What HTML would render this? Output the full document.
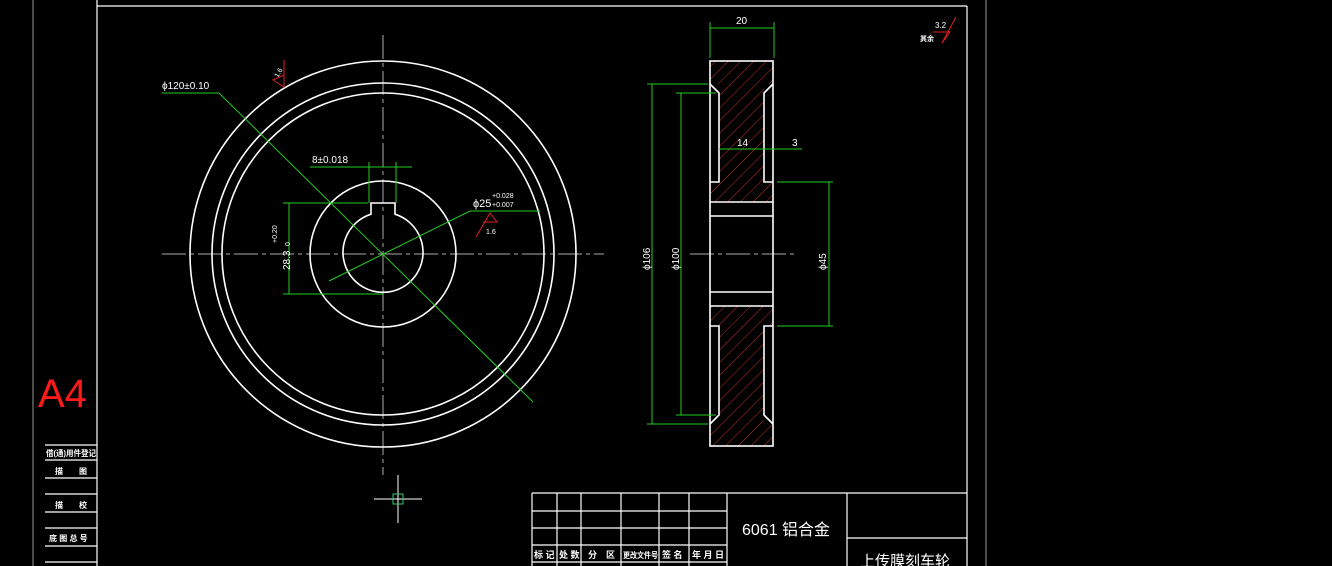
<!DOCTYPE html>
<html><head><meta charset="utf-8"><style>
html,body{margin:0;padding:0;background:#000;width:1332px;height:566px;overflow:hidden}
svg{display:block}
text{font-family:"Liberation Sans","Noto Sans CJK SC",sans-serif}
</style></head><body>
<svg width="1332" height="566" viewBox="0 0 1332 566" xmlns="http://www.w3.org/2000/svg">
<defs>
<pattern id="h" width="9" height="9" patternUnits="userSpaceOnUse" patternTransform="rotate(45)">
<line x1="0" y1="0" x2="0" y2="9" stroke="#c0302a" stroke-width="1"/>
</pattern>
</defs>
<line x1="33" y1="0" x2="33" y2="566" stroke="#999" stroke-width="1"/>
<line x1="986" y1="0" x2="986" y2="566" stroke="#999" stroke-width="1"/>
<g stroke="#fff" stroke-width="1.2" fill="none">
<line x1="97" y1="0" x2="97" y2="566"/>
<line x1="97" y1="6" x2="967" y2="6"/>
<line x1="967" y1="6" x2="967" y2="566"/>
<line x1="45" y1="445" x2="97" y2="445"/>
<line x1="45" y1="460" x2="97" y2="460"/>
<line x1="45" y1="478" x2="97" y2="478"/>
<line x1="45" y1="494" x2="97" y2="494"/>
<line x1="45" y1="512" x2="97" y2="512"/>
<line x1="45" y1="528" x2="97" y2="528"/>
<line x1="45" y1="546" x2="97" y2="546"/>
<line x1="45" y1="562" x2="97" y2="562"/>
</g>
<text x="38" y="407" font-size="40" fill="#ff1a1a">A4</text>
<g fill="#fff" font-size="8" font-weight="bold">
<text x="46" y="456" textLength="50" lengthAdjust="spacingAndGlyphs">借(通)用件登记</text>
<text x="55" y="474">描　　图</text>
<text x="55" y="508">描　　校</text>
<text x="49" y="541">底 图 总 号</text>
</g>
<g stroke="#aaa" stroke-width="1" stroke-dasharray="24 4 4 4">
<line x1="162" y1="254" x2="604" y2="254"/>
<line x1="383" y1="35" x2="383" y2="475"/>
<line x1="690" y1="254" x2="795" y2="254"/>
</g>
<g stroke="#fff" stroke-width="1.6" fill="none">
<circle cx="383" cy="254" r="193"/>
<circle cx="383" cy="254" r="171"/>
<circle cx="383" cy="254" r="161"/>
<circle cx="383" cy="254" r="73"/>
<path d="M371 214.2 A40 40 0 1 0 395 214.2 L395 203 L371 203 Z"/>
</g>
<g stroke="#fff" stroke-width="1"><line x1="374" y1="499" x2="422" y2="499"/><line x1="398" y1="475" x2="398" y2="523"/></g>
<rect x="393" y="494" width="10" height="10" fill="none" stroke="#3c6" stroke-width="1"/>
<g stroke="#2c2" stroke-width="1" fill="none">
<polyline points="162,93 219,93 533,402"/>
<polyline points="310,167 412,167"/>
<line x1="369" y1="162" x2="369" y2="203"/>
<line x1="396" y1="162" x2="396" y2="203"/>
<line x1="283" y1="203" x2="368" y2="203"/>
<line x1="283" y1="294" x2="383" y2="294"/>
<line x1="289" y1="203" x2="289" y2="294"/>
<polyline points="540,211 470,211 329,281"/>
</g>
<g fill="#fff" font-size="10">
<text x="162" y="89">ϕ120±0.10</text>
<text x="312" y="163">8±0.018</text>
<text x="473" y="207" font-size="11">ϕ25</text>
<text x="492" y="198" font-size="7">+0.028</text>
<text x="492" y="207" font-size="7">+0.007</text>
<text x="486" y="234" font-size="7">1.6</text>
<text transform="translate(290,270) rotate(-90)" font-size="10">28.3</text>
<text transform="translate(277,243) rotate(-90)" font-size="7">+0.20</text>
<text transform="translate(290,246) rotate(-90)" font-size="7">0</text>
<text transform="translate(278,78) rotate(-60)" font-size="7">1.6</text>
</g>
<g stroke="#e02020" stroke-width="1" fill="none">
<polyline points="284,60 284,87 273,80 284,75"/>
<polyline points="476,237 490,213 497,222 483,222"/>
</g>
<rect x="710" y="61" width="63" height="141" fill="url(#h)"/>
<rect x="710" y="306" width="63" height="140" fill="url(#h)"/>
<rect x="710" y="84" width="9" height="98" fill="#000"/>
<rect x="764" y="84" width="9" height="98" fill="#000"/>
<rect x="710" y="326" width="9" height="98" fill="#000"/>
<rect x="764" y="326" width="9" height="98" fill="#000"/>
<g stroke="#fff" stroke-width="1.6" fill="none">
<rect x="710" y="61" width="63" height="385"/>
<line x1="710" y1="202" x2="773" y2="202"/>
<line x1="710" y1="216" x2="773" y2="216"/>
<line x1="710" y1="292" x2="773" y2="292"/>
<line x1="710" y1="306" x2="773" y2="306"/>
<polyline points="710,84 719,93 719,182 710,182"/>
<polyline points="773,84 764,93 764,182 773,182"/>
<polyline points="710,424 719,415 719,326 710,326"/>
<polyline points="773,424 764,415 764,326 773,326"/>
</g>
<g stroke="#2c2" stroke-width="1" fill="none">
<line x1="710" y1="22" x2="710" y2="58"/><line x1="774" y1="22" x2="774" y2="58"/>
<line x1="710" y1="28" x2="774" y2="28"/>
<line x1="647" y1="84" x2="708" y2="84"/><line x1="647" y1="424" x2="708" y2="424"/>
<line x1="652" y1="84" x2="652" y2="424"/>
<line x1="676" y1="93" x2="716" y2="93"/><line x1="676" y1="415" x2="716" y2="415"/>
<line x1="681" y1="93" x2="681" y2="415"/>
<line x1="777" y1="182" x2="833" y2="182"/><line x1="777" y1="326" x2="833" y2="326"/>
<line x1="829" y1="182" x2="829" y2="326"/>
<line x1="719" y1="149" x2="802" y2="149"/>
</g>
<g fill="#fff" font-size="10">
<text x="736" y="24">20</text>
<text x="737" y="146">14</text>
<text x="792" y="146">3</text>
<text transform="translate(650,270) rotate(-90)">ϕ106</text>
<text transform="translate(679,270) rotate(-90)">ϕ100</text>
<text transform="translate(826,270) rotate(-90)">ϕ45</text>
<text x="935" y="28" font-size="8">3.2</text>
<text x="920" y="41" font-size="7" font-weight="bold">其余</text>
</g>
<g stroke="#e02020" stroke-width="1" fill="none"><polyline points="933,32 950,32 942,43 956,17"/></g>
<g stroke="#fff" stroke-width="1.2" fill="none">
<line x1="532" y1="493" x2="967" y2="493"/>
<line x1="532" y1="493" x2="532" y2="566"/>
<line x1="727" y1="493" x2="727" y2="566"/>
<line x1="847" y1="493" x2="847" y2="566"/>
<line x1="847" y1="538" x2="967" y2="538"/>
<line x1="532" y1="511" x2="727" y2="511"/>
<line x1="532" y1="528" x2="727" y2="528"/>
<line x1="532" y1="545" x2="727" y2="545"/>
<line x1="532" y1="562" x2="727" y2="562"/>
<line x1="557" y1="493" x2="557" y2="566"/>
<line x1="581" y1="493" x2="581" y2="566"/>
<line x1="621" y1="493" x2="621" y2="566"/>
<line x1="659" y1="493" x2="659" y2="566"/>
<line x1="689" y1="493" x2="689" y2="566"/>
</g>
<g fill="#fff" font-size="9" font-weight="bold">
<text x="534" y="558">标 记</text><text x="559" y="558">处 数</text>
<text x="588" y="558">分　区</text><text x="623" y="558" font-size="8" textLength="35" lengthAdjust="spacingAndGlyphs">更改文件号</text>
<text x="662" y="558">签 名</text><text x="692" y="558">年 月 日</text>
</g>
<text x="742" y="535" fill="#fff" font-size="16">6061 铝合金</text>
<text x="860" y="566" fill="#fff" font-size="15">上传膜刻车轮</text>
</svg>
</body></html>
